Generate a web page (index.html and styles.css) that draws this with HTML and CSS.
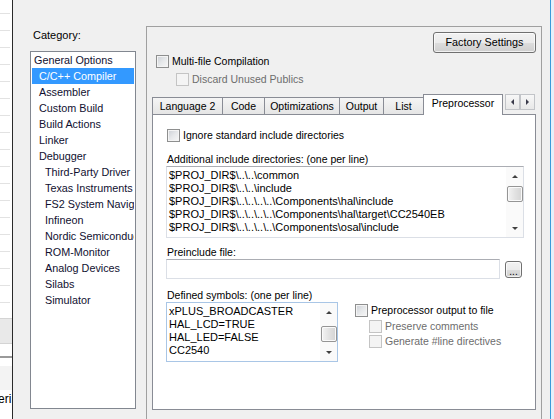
FILE: index.html
```html
<!DOCTYPE html>
<html>
<head>
<meta charset="utf-8">
<title>Options</title>
<link rel="stylesheet" href="styles.css">
</head>
<body>
<div class="strip">
  <div class="strip-lines"></div>
  <div class="strip-band"></div>
  <div class="strip-rule"></div>
  <div class="strip-light"></div>
  <div class="strip-text">eri</div>
</div>
<div class="dialog">
  <div class="catcol">
    <div class="catlabel">Category:</div>
    <div class="listbox">
      <div class="item l0">General Options</div>
      <div class="item l1 sel">C/C++ Compiler</div>
      <div class="item l1">Assembler</div>
      <div class="item l1">Custom Build</div>
      <div class="item l1">Build Actions</div>
      <div class="item l1">Linker</div>
      <div class="item l1">Debugger</div>
      <div class="item l2">Third-Party Driver</div>
      <div class="item l2">Texas Instruments</div>
      <div class="item l2">FS2 System Navigator</div>
      <div class="item l2">Infineon</div>
      <div class="item l2">Nordic Semiconductor</div>
      <div class="item l2">ROM-Monitor</div>
      <div class="item l2">Analog Devices</div>
      <div class="item l2">Silabs</div>
      <div class="item l2">Simulator</div>
    </div>
  </div>
  <div class="frame">
    <button class="btn factory">Factory Settings</button>
    <label class="chk multi"><span class="box"></span>Multi-file Compilation</label>
    <label class="chk dis discard"><span class="box"></span>Discard Unused Publics</label>
    <div class="tabs">
      <div class="tab t-lang">Language 2</div>
      <div class="tab t-code">Code</div>
      <div class="tab t-opt">Optimizations</div>
      <div class="tab t-out">Output</div>
      <div class="tab t-list">List</div>
      <div class="tab t-pre sel">Preprocessor</div>
      <div class="tabscroll">
        <span class="sbtn"><i class="tri left"></i></span>
        <span class="sbtn"><i class="tri right"></i></span>
      </div>
    </div>
    <div class="panel">
      <label class="chk ignore"><span class="box"></span>Ignore standard include directories</label>
      <div class="flabel first">Additional include directories: (one per line)</div>
      <div class="textbox incdirs">
        <div class="lines">
          <div>$PROJ_DIR$\..\..\common</div>
          <div>$PROJ_DIR$\..\..\include</div>
          <div>$PROJ_DIR$\..\..\..\..\Components\hal\include</div>
          <div>$PROJ_DIR$\..\..\..\..\Components\hal\target\CC2540EB</div>
          <div>$PROJ_DIR$\..\..\..\..\Components\osal\include</div>
        </div>
        <div class="vscroll inc">
          <span class="arrow up"></span>
          <span class="thumb"></span>
          <span class="arrow down"></span>
        </div>
      </div>
      <div class="flabel pre">Preinclude file:</div>
      <div class="inrow">
        <div class="textbox input"></div>
        <button class="btn dots">...</button>
      </div>
      <div class="flabel def">Defined symbols: (one per line)</div>
      <div class="botrow">
        <div class="textbox defs">
          <div class="lines">
            <div>xPLUS_BROADCASTER</div>
            <div>HAL_LCD=TRUE</div>
            <div>HAL_LED=FALSE</div>
            <div>CC2540</div>
          </div>
          <div class="vscroll def">
            <span class="arrow up"></span>
            <span class="thumb"></span>
            <span class="arrow down"></span>
          </div>
        </div>
        <div class="ppcol">
          <label class="chk ppout"><span class="box"></span>Preprocessor output to file</label>
          <label class="chk dis sub first"><span class="box"></span>Preserve comments</label>
          <label class="chk dis sub second"><span class="box"></span>Generate #line directives</label>
        </div>
      </div>
    </div>
  </div>
  <div class="edge"></div>
</div>
</body>
</html>
```

FILE: styles.css
```css
* { box-sizing: border-box; }

html, body {
  margin: 0;
  padding: 0;
}

body {
  width: 554px;
  height: 419px;
  overflow: hidden;
  display: flex;
  background: #f0f0f0;
  font-family: "Liberation Sans", Arial, sans-serif;
  font-size: 10.5px;
  line-height: 13px;
  color: #000;
}

/* ---------- left window strip ---------- */
.strip {
  width: 13px;
  flex: none;
  background: #fff;
  border-right: 1px solid #2a2a2a;
  display: flex;
  flex-direction: column;
  overflow: hidden;
}
.strip-lines {
  height: 318px;
  background-image: repeating-linear-gradient(to bottom,
    transparent 0, transparent 13px,
    #e2e2e2 13px, #e2e2e2 14px,
    transparent 14px, transparent 17px);
  background-size: 10px 100%;
  background-repeat: no-repeat;
}
.strip-band {
  height: 26px;
  background: #e9e9e9;
  border-top: 1px solid #d4d4d4;
  border-bottom: 1px solid #d4d4d4;
}
.strip-rule {
  margin-top: 12px;
  height: 2px;
  background: #9a9a9a;
}
.strip-light {
  margin-top: 8px;
  height: 24px;
  background: #f3f3f3;
}
.strip-text {
  margin-top: 2px;
  font-size: 12px;
  line-height: 14px;
  white-space: nowrap;
  margin-left: -2px;
}

/* ---------- dialog ---------- */
.dialog {
  flex: 1;
  display: flex;
  align-items: flex-start;
  height: 419px;
}

.catcol {
  width: 106px;
  margin-left: 17px;
  padding-top: 29px;
  flex: none;
}
.catlabel {
  padding-left: 3px;
  height: 13px;
  font-size: 11px;
}
.listbox {
  margin-top: 9px;
  height: 358px;
  border: 1px solid #828790;
  background: #fff;
  overflow: hidden;
  color: #101030;
  font-size: 10.8px;
}
.item {
  height: 16px;
  line-height: 16px;
  margin: 0 1px;
  white-space: nowrap;
  overflow: hidden;
}
.item.l0 { padding-left: 2px; }
.item.l1 { padding-left: 7px; }
.item.l2 { padding-left: 13px; }
.item.sel {
  background: #3399ff;
  color: #fff;
}

/* ---------- frame ---------- */
.frame {
  width: 396px;
  flex: none;
  margin-left: 10px;
  margin-top: 26px;
  height: 393px;
  border: 1px solid #a0a0a0;
  border-bottom: none;
  padding: 5px 5px 0 5px;
  display: flex;
  flex-direction: column;
}

.btn {
  font-family: inherit;
  font-size: 10.8px;
  line-height: 13px;
  color: #000;
  border: 1px solid #707070;
  border-radius: 3px;
  background: linear-gradient(#f2f2f2 0%, #ebebeb 50%, #dddddd 51%, #cfcfcf 100%);
  box-shadow: inset 0 0 0 1px rgba(255,255,255,0.7);
  padding: 0;
  margin: 0;
}
.factory {
  align-self: flex-end;
  width: 103px;
  height: 21px;
}

/* checkboxes */
.chk {
  display: flex;
  align-items: center;
  height: 13px;
  gap: 3px;
  white-space: nowrap;
}
.box {
  width: 13px;
  height: 13px;
  flex: none;
  border: 1px solid #8e8f8f;
  background: linear-gradient(135deg, #cbcfd5 0%, #e6e8ea 50%, #f7f7f7 100%);
  box-shadow: inset 0 0 0 1px #f4f4f4;
}
.chk.dis { color: #6d6d6d; }
.chk.dis .box {
  border-color: #c4c4c4;
  background: #f4f4f4;
  box-shadow: none;
}
.multi { margin-top: 2px; margin-left: 4px; }
.discard { margin-top: 5px; margin-left: 24px; }

/* tabs */
.tabs {
  margin-top: 8px;
  height: 20px;
  display: flex;
  align-items: flex-start;
}
.tab {
  height: 17px;
  margin-top: 3px;
  margin-left: -1px;
  border: 1px solid #898c95;
  border-bottom: none;
  background: linear-gradient(#f5f5f5, #e5e5e5);
  text-align: center;
  padding-top: 2px;
  white-space: nowrap;
}
.tab.t-lang { margin-left: 0; width: 71px; }
.tab.t-code { width: 43px; }
.tab.t-opt { width: 76px; }
.tab.t-out { width: 45px; }
.tab.t-list { width: 41px; }
.tab.t-pre { width: 80px; }
.tab.sel {
  margin-top: 0;
  height: 21px;
  background: #fff;
  position: relative;
  z-index: 2;
}
.tabscroll {
  display: flex;
  margin-left: 2px;
}
.sbtn {
  width: 15px;
  height: 16px;
  border: 1px solid #c2c4c8;
  background: linear-gradient(#f7f7f7, #e8e8e8);
  display: flex;
  align-items: center;
  justify-content: center;
}
.tri {
  width: 0;
  height: 0;
  border-top: 3px solid transparent;
  border-bottom: 3px solid transparent;
}
.tri.left { border-right: 3px solid #3a3a4a; }
.tri.right { border-left: 3px solid #3a3a4a; }

/* panel */
.panel {
  height: 296px;
  border: 1px solid #898c95;
  background: #fff;
  display: flex;
  flex-direction: column;
  align-items: flex-start;
}
.ignore { margin-top: 14px; margin-left: 14px; }
.flabel {
  margin-left: 14px;
  height: 13px;
  white-space: nowrap;
}
.flabel.first { margin-top: 11px; }
.flabel.pre { margin-top: 8px; }
.flabel.def { margin-top: 10px; }

.textbox {
  margin-left: 13px;
  border: 1px solid #dbdfe6;
  border-top-color: #abadb3;
  background: #fff;
  display: flex;
}
.lines {
  flex: 1;
  padding: 2px 0 0 2px;
  white-space: nowrap;
  overflow: hidden;
  font-size: 11px;
}
.incdirs {
  width: 358px;
  height: 72px;
}
.inrow {
  display: flex;
  align-items: flex-start;
}
.input {
  width: 334px;
  height: 20px;
}
.dots {
  margin-left: 5px;
  margin-top: 2px;
  width: 17px;
  height: 17px;
  font-size: 10px;
  line-height: 10px;
  padding-top: 4px;
}
.botrow {
  display: flex;
  align-items: flex-start;
}
.defs {
  width: 172px;
  height: 60px;
  border-color: #a9c6e6;
}

/* scrollbars */
.vscroll {
  width: 17px;
  flex: none;
  height: 100%;
  background: #fafafa;
  display: flex;
  flex-direction: column;
  align-items: center;
}
.arrow {
  width: 0;
  height: 0;
  border-left: 3px solid transparent;
  border-right: 3px solid transparent;
}
.arrow.up { border-bottom: 3px solid #404040; margin-top: 8px; }
.arrow.down { border-top: 3px solid #404040; margin-top: auto; margin-bottom: 7px; }
.thumb {
  width: 16px;
  height: 16px;
  border: 1px solid #959595;
  border-radius: 2px;
  background: linear-gradient(to right, #f3f3f3, #e2e2e2 50%, #d4d4d4);
  box-shadow: inset 0 0 0 1px #fafafa;
}
.vscroll.inc .thumb { margin-top: 8px; }
.vscroll.def .thumb { margin-top: 12px; }

.ppcol {
  margin-left: 17px;
  padding-top: 2px;
  display: flex;
  flex-direction: column;
}
.chk.sub { margin-left: 14px; }
.chk.sub.first { margin-top: 3px; }
.chk.sub.second { margin-top: 2px; }

/* right edge */
.edge {
  width: 12px;
  flex: none;
  height: 419px;
  background: linear-gradient(to right, #f0f0f0 0, #f0f0f0 8px, #3a9ad9 8px, #3a9ad9 9px, #e6f0fa 9px);
}
```
